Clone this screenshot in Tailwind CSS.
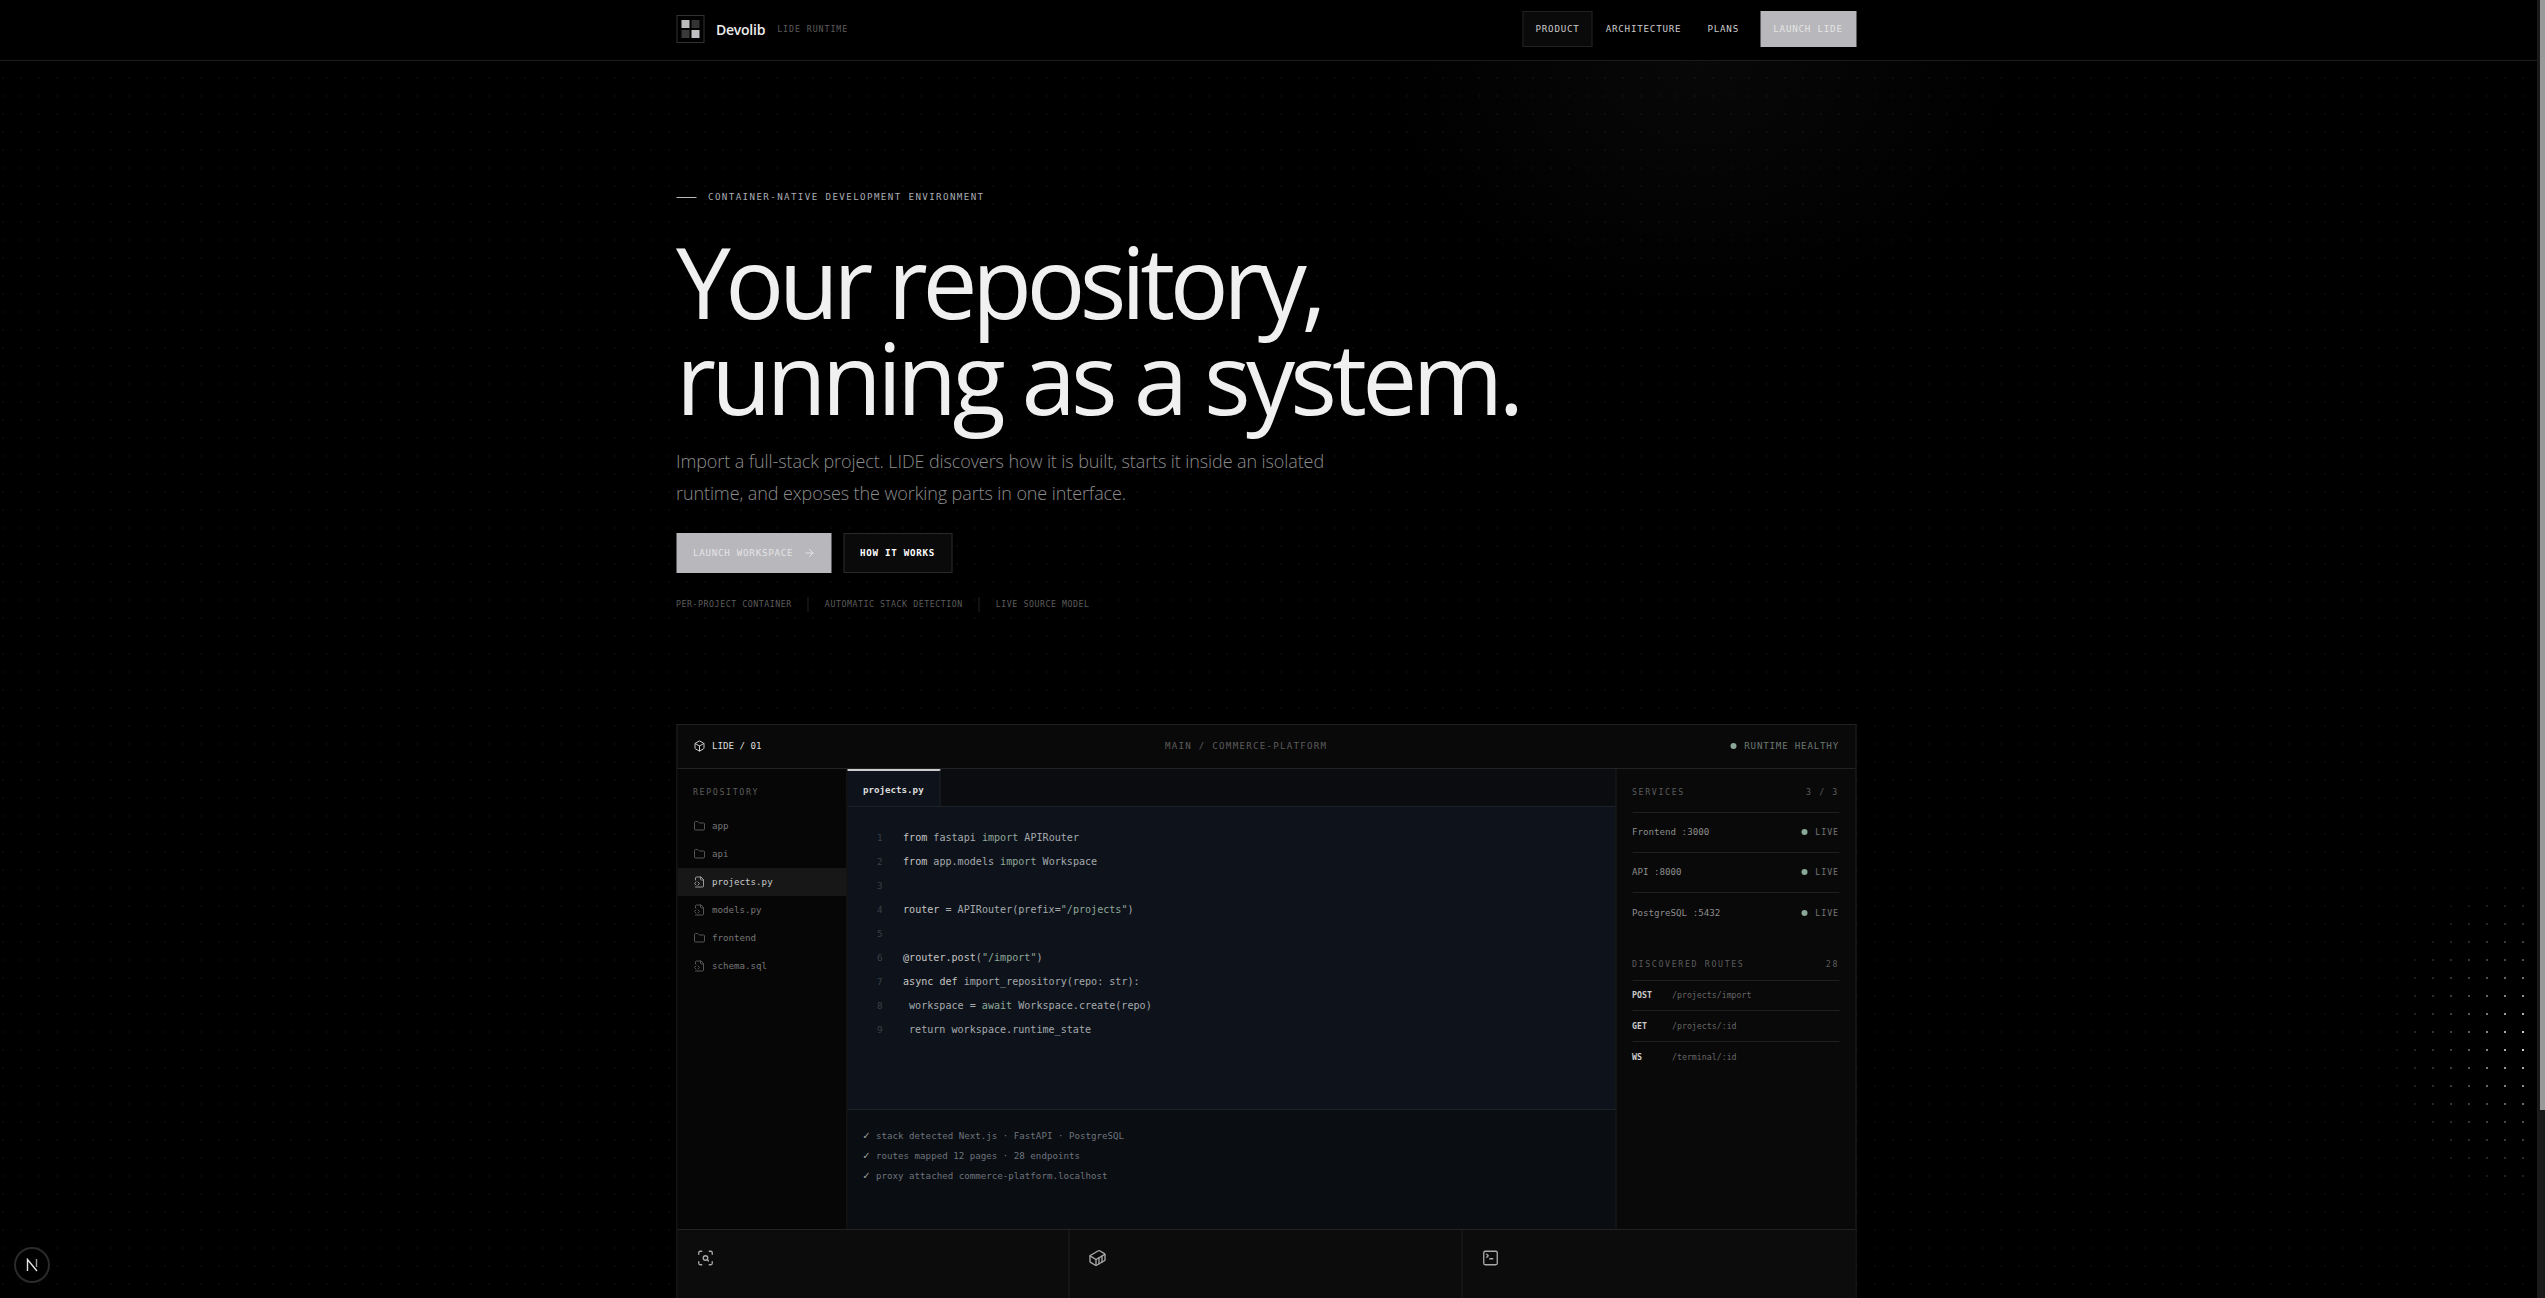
<!DOCTYPE html>
<html lang="en">
<head>
    <meta charset="UTF-8">
    <meta name="viewport" content="width=device-width, initial-scale=1.0">
    <title>Devolib - LIDE Runtime</title>
    <script src="https://cdn.jsdelivr.net/npm/@tailwindcss/browser@4"></script>
</head>
<body class="relative h-screen overflow-hidden bg-black font-['DejaVu_Sans_Mono',monospace] text-[#888]">

<!-- Page dot grid and glows -->
<div class="absolute inset-0 bg-[radial-gradient(circle,rgba(255,255,255,0.035)_0.8px,transparent_1px)] bg-[size:18px_18px] bg-[position:-6px_-3px]"></div>
<div class="absolute inset-0 bg-[radial-gradient(ellipse_330px_260px_at_1700px_60px,rgba(255,255,255,0.03),transparent)]"></div>
<div class="absolute inset-0 bg-[radial-gradient(circle,rgba(255,255,255,1)_0.9px,transparent_1.2px)] bg-[size:18px_18px] bg-[position:-6px_-3px] [mask-image:radial-gradient(ellipse_150px_170px_at_2532px_1040px,rgba(0,0,0,0.9),rgba(0,0,0,0.25)_50%,transparent)]"></div>

<!-- Scrollbar -->
<div class="absolute top-0 right-0 bottom-0 z-20 w-2 bg-[#1a1a1a]">
    <div class="ml-[3px] h-[1110px] bg-[#999]"></div>
</div>

<div class="relative z-10">
    <!-- Header -->
    <header class="h-[61px] border-b border-[#1c1c1c] bg-black">
        <div class="mx-auto flex h-[60px] w-[1180px] items-start justify-between -translate-x-[6.5px]">
            <div class="flex items-center pt-[15px]">
                <div class="grid size-[28px] grid-cols-[8px_8px] content-center justify-center gap-[2px] border border-[#333]">
                    <span class="size-2 bg-[#bbb]"></span>
                    <span class="size-2 bg-[#333]"></span>
                    <span class="size-2 bg-[#3a3a3a]"></span>
                    <span class="size-2 bg-[#c0bfc4]"></span>
                </div>
                <span class="ml-3 font-['Open_Sans',sans-serif] text-[14px] font-semibold tracking-[-0.25px] text-[#eee]">Devolib</span>
                <span class="ml-3 text-[8.25px] tracking-[0.95px] text-[#5c5c5c]">LIDE RUNTIME</span>
            </div>
            <nav class="flex items-center pt-[11px] text-[9.17px] tracking-[0.8px] text-[#ccc]">
                <a class="flex h-[36px] items-center border border-[#222] bg-[#0a0a0a] px-3">PRODUCT</a>
                <a class="flex h-[36px] items-center px-[13px]">ARCHITECTURE</a>
                <a class="flex h-[36px] items-center px-[13px]">PLANS</a>
                <a class="ml-2 flex h-[36px] w-[96px] items-center justify-center bg-[#b8b7bc] text-[#e5e5e5]">LAUNCH LIDE</a>
            </nav>
        </div>
    </header>

    <main class="mx-auto w-[1180px] -translate-x-[6.5px]">
        <!-- Hero -->
        <section class="pt-[129px]">
            <div class="flex h-[14px] items-center gap-3 text-[9.17px] tracking-[1.4px] text-[#a9adb5]">
                <span class="h-px w-5 bg-[#bbb]"></span>
                <span>CONTAINER-NATIVE DEVELOPMENT ENVIRONMENT</span>
            </div>
            <h1 class="mt-[29px] font-['Open_Sans',sans-serif] text-[98px] leading-[96px] font-[370] tracking-[-4.8px] text-[#f0f0f0]"><span class="tracking-[-5.5px]">Your repository,</span><br>running as a system.</h1>
            <p class="mt-[20px] w-[680px] font-['Open_Sans',sans-serif] text-[18px] leading-[32.4px] font-[340] tracking-[-0.1px] text-[#8c8c8c]">Import a full-stack project. LIDE discovers how it is built, starts it inside an isolated runtime, and exposes the working parts in one interface.</p>
            <div class="mt-[23px] flex gap-3 text-[9.17px] tracking-[0.75px]">
                <a class="flex h-[40px] w-[155px] items-center gap-[10px] bg-[#b8b7bc] pl-[17px] text-[#e5e5e5]">
                    LAUNCH WORKSPACE
                    <svg class="size-[12px]" viewBox="0 0 24 24" fill="none" stroke="currentColor" stroke-width="2" stroke-linecap="round" stroke-linejoin="round"><path d="M5 12h14"/><path d="m12 5 7 7-7 7"/></svg>
                </a>
                <a class="flex h-[40px] w-[109px] items-center justify-center border border-[#2a2a2a] bg-[#0a0a0a] font-bold text-white">HOW IT WORKS</a>
            </div>
            <div class="mt-[24px] flex h-[15px] items-center text-[8.25px] tracking-[0.55px] text-[#5c5c5c]">
                <span>PER-PROJECT CONTAINER</span>
                <span class="mx-4 h-[15px] w-px bg-[#222]"></span>
                <span>AUTOMATIC STACK DETECTION</span>
                <span class="mx-4 h-[15px] w-px bg-[#222]"></span>
                <span>LIVE SOURCE MODEL</span>
            </div>
        </section>

        <!-- Workspace panel -->
        <section class="mt-[112px] border border-[#222] bg-[#090909]">
            <div class="relative flex h-[44px] items-center justify-between border-b border-[#222] px-4">
                <div class="flex items-center gap-[7px] text-[9.17px] text-[#ddd]">
                    <svg class="size-[12px]" viewBox="0 0 24 24" fill="none" stroke="#ccc" stroke-width="2" stroke-linecap="round" stroke-linejoin="round"><path d="M21 8a2 2 0 0 0-1-1.73l-7-4a2 2 0 0 0-2 0l-7 4A2 2 0 0 0 3 8v8a2 2 0 0 0 1 1.73l7 4a2 2 0 0 0 2 0l7-4A2 2 0 0 0 21 16Z"/><path d="m3.3 7 8.7 5 8.7-5"/><path d="M12 22V12"/></svg>
                    LIDE / 01
                </div>
                <div class="absolute left-[488px] text-[9.17px] tracking-[1.25px] text-[#5c5c5c]">MAIN / COMMERCE-PLATFORM</div>
                <div class="flex items-center gap-2 text-[9.17px] tracking-[0.8px] text-[#6d7872]">
                    <span class="size-[6px] rounded-full bg-[#8aa898]"></span>
                    RUNTIME HEALTHY
                </div>
            </div>

            <div class="flex h-[460px]">
                <!-- Repository tree -->
                <aside class="w-[170px] shrink-0 border-r border-[#1f1f1f] bg-[#060606] pt-4">
                    <div class="flex h-[14px] items-center px-4 text-[8.25px] tracking-[1.65px] text-[#5c5c5c]">REPOSITORY</div>
                    <ul class="mt-[13px] text-[9.17px] text-[#767676]">
                        <li class="flex h-7 items-center gap-[7px] pl-4">
                            <svg class="size-[12px]" viewBox="0 0 24 24" fill="none" stroke="#555" stroke-width="2" stroke-linecap="round" stroke-linejoin="round"><path d="M20 20a2 2 0 0 0 2-2V8a2 2 0 0 0-2-2h-7.9a2 2 0 0 1-1.69-.9L9.6 3.9A2 2 0 0 0 7.93 3H4a2 2 0 0 0-2 2v13a2 2 0 0 0 2 2Z"/></svg>
                            app
                        </li>
                        <li class="flex h-7 items-center gap-[7px] pl-4">
                            <svg class="size-[12px]" viewBox="0 0 24 24" fill="none" stroke="#555" stroke-width="2" stroke-linecap="round" stroke-linejoin="round"><path d="M20 20a2 2 0 0 0 2-2V8a2 2 0 0 0-2-2h-7.9a2 2 0 0 1-1.69-.9L9.6 3.9A2 2 0 0 0 7.93 3H4a2 2 0 0 0-2 2v13a2 2 0 0 0 2 2Z"/></svg>
                            api
                        </li>
                        <li class="flex h-7 items-center gap-[7px] bg-[#171717] pl-4 text-[#c8c8c8]">
                            <svg class="size-[12px]" viewBox="0 0 24 24" fill="none" stroke="#999" stroke-width="2" stroke-linecap="round" stroke-linejoin="round"><path d="M4 22h14a2 2 0 0 0 2-2V7l-5-5H6a2 2 0 0 0-2 2v4"/><path d="M14 2v4a2 2 0 0 0 2 2h4"/><path d="m5 12-3 3 3 3"/><path d="m9 18 3-3-3-3"/></svg>
                            projects.py
                        </li>
                        <li class="flex h-7 items-center gap-[7px] pl-4">
                            <svg class="size-[12px]" viewBox="0 0 24 24" fill="none" stroke="#555" stroke-width="2" stroke-linecap="round" stroke-linejoin="round"><path d="M4 22h14a2 2 0 0 0 2-2V7l-5-5H6a2 2 0 0 0-2 2v4"/><path d="M14 2v4a2 2 0 0 0 2 2h4"/><path d="m5 12-3 3 3 3"/><path d="m9 18 3-3-3-3"/></svg>
                            models.py
                        </li>
                        <li class="flex h-7 items-center gap-[7px] pl-4">
                            <svg class="size-[12px]" viewBox="0 0 24 24" fill="none" stroke="#555" stroke-width="2" stroke-linecap="round" stroke-linejoin="round"><path d="M20 20a2 2 0 0 0 2-2V8a2 2 0 0 0-2-2h-7.9a2 2 0 0 1-1.69-.9L9.6 3.9A2 2 0 0 0 7.93 3H4a2 2 0 0 0-2 2v13a2 2 0 0 0 2 2Z"/></svg>
                            frontend
                        </li>
                        <li class="flex h-7 items-center gap-[7px] pl-4">
                            <svg class="size-[12px]" viewBox="0 0 24 24" fill="none" stroke="#555" stroke-width="2" stroke-linecap="round" stroke-linejoin="round"><path d="M4 22h14a2 2 0 0 0 2-2V7l-5-5H6a2 2 0 0 0-2 2v4"/><path d="M14 2v4a2 2 0 0 0 2 2h4"/><path d="m5 12-3 3 3 3"/><path d="m9 18 3-3-3-3"/></svg>
                            schema.sql
                        </li>
                    </ul>
                </aside>

                <!-- Editor -->
                <div class="flex min-w-0 flex-1 flex-col">
                    <div class="h-[38px] shrink-0 border-b border-[#1d2026] bg-[#0a0c10]">
                        <div class="flex h-[37px] w-[93px] items-center border-t-2 border-r border-t-[#ccc] border-r-[#1d2026] bg-[#0e131b] pt-[4px] pl-4 text-[9.17px] font-bold text-[#ddd]">projects.py</div>
                    </div>
                    <div class="h-[302px] shrink-0 bg-[#0e131b] pt-[19px] text-[10.08px] leading-[24px] text-[#a5a9ad]">
                        <div class="flex pl-[30px]"><span class="w-[26px] text-[9.17px] text-[#3a4048]">1</span><span><span class="text-[#c4c4c4]">from</span> fastapi <span class="text-[#8fa89a]">import</span> APIRouter</span></div>
                        <div class="flex pl-[30px]"><span class="w-[26px] text-[9.17px] text-[#3a4048]">2</span><span><span class="text-[#c4c4c4]">from</span> app.models <span class="text-[#8fa89a]">import</span> Workspace</span></div>
                        <div class="flex h-6 pl-[30px]"><span class="w-[26px] text-[9.17px] text-[#3a4048]">3</span></div>
                        <div class="flex pl-[30px]"><span class="w-[26px] text-[9.17px] text-[#3a4048]">4</span><span><span class="text-[#c4c4c4]">router</span> = APIRouter(prefix=<span class="text-[#8fa89a]">"/projects"</span>)</span></div>
                        <div class="flex h-6 pl-[30px]"><span class="w-[26px] text-[9.17px] text-[#3a4048]">5</span></div>
                        <div class="flex pl-[30px]"><span class="w-[26px] text-[9.17px] text-[#3a4048]">6</span><span><span class="text-[#c4c4c4]">@router.post</span>(<span class="text-[#8fa89a]">"/import"</span>)</span></div>
                        <div class="flex pl-[30px]"><span class="w-[26px] text-[9.17px] text-[#3a4048]">7</span><span><span class="text-[#c4c4c4]">async def</span> import_repository(repo: str):</span></div>
                        <div class="flex pl-[30px]"><span class="w-[26px] text-[9.17px] text-[#3a4048]">8</span><span class="pl-[6px]">workspace = <span class="text-[#8fa89a]">await</span> Workspace.create(repo)</span></div>
                        <div class="flex pl-[30px]"><span class="w-[26px] text-[9.17px] text-[#3a4048]">9</span><span class="pl-[6px]">return workspace.runtime_state</span></div>
                    </div>
                    <div class="flex-1 border-t border-[#1d2026] bg-[#0a0d12] px-4 pt-4 text-[9.17px] leading-[20px] text-[#6d747c]">
                        <div><span class="inline-block w-[13px] text-[11px] text-[#a0a8a4]">✓</span>stack detected Next.js · FastAPI · PostgreSQL</div>
                        <div><span class="inline-block w-[13px] text-[11px] text-[#a0a8a4]">✓</span>routes mapped 12 pages · 28 endpoints</div>
                        <div><span class="inline-block w-[13px] text-[11px] text-[#a0a8a4]">✓</span>proxy attached commerce-platform.localhost</div>
                    </div>
                </div>

                <!-- Services and routes -->
                <aside class="w-[240px] shrink-0 border-l border-[#1f1f1f] px-4 pt-4">
                    <div class="flex h-[14px] items-center justify-between text-[8.25px] tracking-[1.65px] text-[#5c5c5c]">
                        <span>SERVICES</span><span>3 / 3</span>
                    </div>
                    <div class="mt-[13px] border-t border-[#1f1f1f] text-[9.17px] text-[#8c8c8c]">
                        <div class="flex h-10 items-center justify-between border-b border-[#1f1f1f]">
                            <span>Frontend :3000</span>
                            <span class="flex items-center gap-[8px] text-[8.25px] tracking-[0.95px] text-[#757575]"><i class="size-[6px] rounded-full bg-[#8aa898]"></i>LIVE</span>
                        </div>
                        <div class="flex h-10 items-center justify-between border-b border-[#1f1f1f]">
                            <span>API :8000</span>
                            <span class="flex items-center gap-[8px] text-[8.25px] tracking-[0.95px] text-[#757575]"><i class="size-[6px] rounded-full bg-[#8aa898]"></i>LIVE</span>
                        </div>
                        <div class="flex h-10 items-center justify-between">
                            <span>PostgreSQL :5432</span>
                            <span class="flex items-center gap-[8px] text-[8.25px] tracking-[0.95px] text-[#757575]"><i class="size-[6px] rounded-full bg-[#8aa898]"></i>LIVE</span>
                        </div>
                    </div>
                    <div class="mt-[24px] flex h-[14px] items-center justify-between text-[8.25px] tracking-[1.65px] text-[#5c5c5c]">
                        <span>DISCOVERED ROUTES</span><span>28</span>
                    </div>
                    <div class="mt-[9px] border-t border-[#1f1f1f] text-[8.25px]">
                        <div class="flex h-[30.5px] items-center border-b border-[#1f1f1f]"><span class="w-10 font-bold text-[#ccc]">POST</span><span class="text-[#666]">/projects/import</span></div>
                        <div class="flex h-[30.5px] items-center border-b border-[#1f1f1f]"><span class="w-10 font-bold text-[#ccc]">GET</span><span class="text-[#666]">/projects/:id</span></div>
                        <div class="flex h-[30.5px] items-center"><span class="w-10 font-bold text-[#ccc]">WS</span><span class="text-[#666]">/terminal/:id</span></div>
                    </div>
                </aside>
            </div>

            <!-- Feature row, cut off by the window -->
            <div class="grid h-[160px] grid-cols-3 border-t border-[#222] bg-[#0c0c0c]">
                <div class="border-r border-[#1c1c1c] pt-[19px] pl-[19px]">
                    <svg class="size-[18px]" viewBox="0 0 24 24" fill="none" stroke="#aaa" stroke-width="1.75" stroke-linecap="round" stroke-linejoin="round"><path d="M3 7V5a2 2 0 0 1 2-2h2"/><path d="M17 3h2a2 2 0 0 1 2 2v2"/><path d="M21 17v2a2 2 0 0 1-2 2h-2"/><path d="M7 21H5a2 2 0 0 1-2-2v-2"/><circle cx="12" cy="12" r="3"/><path d="m16 16-1.9-1.9"/></svg>
                </div>
                <div class="border-r border-[#1c1c1c] pt-[19px] pl-[19px]">
                    <svg class="size-[18px]" viewBox="0 0 24 24" fill="none" stroke="#aaa" stroke-width="1.75" stroke-linecap="round" stroke-linejoin="round"><path d="M22 7.7c0-.6-.4-1.2-.8-1.5l-6.3-3.9a1.72 1.72 0 0 0-1.7 0l-10.3 6c-.5.2-.9.8-.9 1.4v6.6c0 .5.4 1.2.8 1.5l6.3 3.9a1.72 1.72 0 0 0 1.7 0l10.3-6c.5-.3.9-1 .9-1.5Z"/><path d="M10 21.9V14L2.1 9.1"/><path d="m10 14 11.9-6.9"/><path d="M14 19.8v-8.1"/><path d="M18 17.5V9.4"/></svg>
                </div>
                <div class="pt-[19px] pl-[19px]">
                    <svg class="size-[18px]" viewBox="0 0 24 24" fill="none" stroke="#aaa" stroke-width="1.75" stroke-linecap="round" stroke-linejoin="round"><path d="m7 11 2-2-2-2"/><path d="M11 13h4"/><rect width="18" height="18" x="3" y="3" rx="2" ry="2"/></svg>
                </div>
            </div>
        </section>
    </main>
</div>

<!-- Dev indicator badge -->
<div class="absolute bottom-[15px] left-[14px] z-20 flex size-[36px] items-center justify-center rounded-full border-2 border-[#2a2a2a] bg-black">
    <svg class="size-[14px]" viewBox="0 0 14 14" fill="none" stroke="#e5e5e5" stroke-width="1.4"><path d="M2.5 13V1.5L12 13"/><path d="M11.5 1v8" stroke="#999"/></svg>
</div>

</body>
</html>
